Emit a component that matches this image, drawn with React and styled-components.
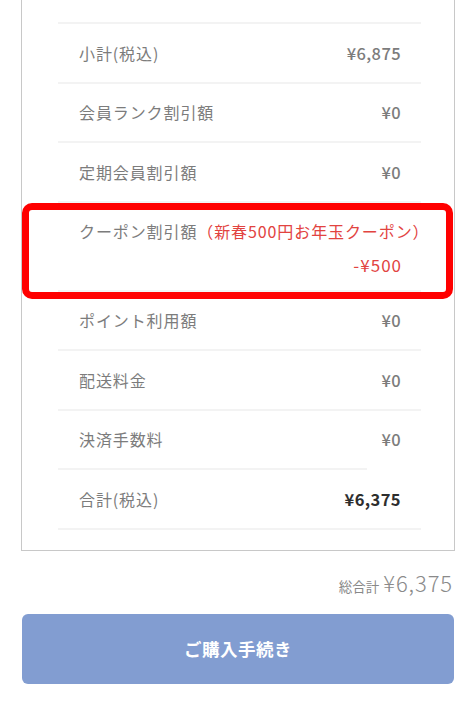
import React from "react";
import styled, { createGlobalStyle, css } from "styled-components";

const Global = createGlobalStyle`
  html, body { margin: 0; padding: 0; background: #fff; }
  body { font-family: "Noto Sans CJK JP", "Noto Sans", sans-serif; }
`;

const Page = styled.div`
  width: 474px;
  height: 704px;
  padding: 0 19px 0 21px;
  box-sizing: border-box;
  overflow: hidden;
`;

const Panel = styled.div`
  position: relative;
  border: 1px solid #c8c8c8;
  border-top: none;
  padding: 22px 33px 20px 36px;
  box-sizing: border-box;
`;

const List = styled.div`
  border-top: 2px solid #f3f3f3;
  display: flex;
  flex-direction: column;
`;

const Row = styled.div`
  position: relative;
  display: flex;
  align-items: center;
  justify-content: space-between;
  height: 57.5px;
  padding: 0 21px;
  border-bottom: 2px solid #f3f3f3;
  ${(p) =>
    p.$short &&
    css`
      border-bottom-color: transparent;
      &::after {
        content: "";
        position: absolute;
        left: 0;
        right: 54px;
        bottom: -2px;
        height: 2px;
        background: #f3f3f3;
      }
    `}
`;

const Label = styled.span`
  font-size: 16px;
  color: #7c7c7c;
  letter-spacing: 0.9px;
  white-space: nowrap;
`;

const Value = styled.span`
  font-size: 16.5px;
  font-weight: ${(p) => (p.$strong ? 700 : 500)};
  color: ${(p) => (p.$strong ? "#2e2e2e" : "#7c7c7c")};
  letter-spacing: 0.4px;
  margin-right: -1px;
  white-space: nowrap;
`;

const CouponRow = styled.div`
  display: flex;
  flex-direction: column;
  height: 89px;
  padding: 16px 21px 0;
  box-sizing: border-box;
  border-bottom: 2px solid #f3f3f3;
`;

const CouponName = styled.span`
  color: #e2433f;
`;

const CouponValue = styled.span`
  align-self: flex-end;
  margin-top: 9px;
  margin-right: -2px;
  font-size: 17px;
  font-weight: 400;
  color: #e2433f;
  letter-spacing: 1px;
  white-space: pre;
`;

const Highlight = styled.div`
  position: absolute;
  left: 0;
  right: 1px;
  top: 203px;
  height: 96px;
  border: 7px solid #ff0000;
  border-radius: 10px;
  box-sizing: border-box;
  pointer-events: none;
`;

const Total = styled.div`
  display: flex;
  justify-content: flex-end;
  align-items: baseline;
  gap: 4px;
  padding: 15px 2px 0 0;
  height: 63px;
  box-sizing: border-box;
`;

const TotalLabel = styled.span`
  font-size: 13.5px;
  color: #888;
`;

const TotalAmount = styled.span`
  font-size: 22px;
  font-weight: 300;
  color: #8a8a8a;
  letter-spacing: 0.9px;
`;

const Button = styled.button`
  display: flex;
  align-items: center;
  justify-content: center;
  width: 432px;
  height: 70px;
  margin-left: 1px;
  border: none;
  border-radius: 6px;
  background: #829dd1;
  color: #fff;
  font-family: inherit;
  font-size: 17.5px;
  font-weight: 700;
  letter-spacing: 0.5px;
`;

const rows = [
  ["小計(税込)", "¥6,875"],
  ["会員ランク割引額", "¥0"],
  ["定期会員割引額", "¥0"],
];

const rows2 = [
  ["ポイント利用額", "¥0"],
  ["配送料金", "¥0"],
  ["決済手数料", "¥0", true],
];

export default function App() {
  return (
    <>
      <Global />
      <Page>
        <Panel>
          <List>
            {rows.map(([l, v]) => (
              <Row key={l}>
                <Label>{l}</Label>
                <Value>{v}</Value>
              </Row>
            ))}
            <CouponRow>
              <Label>
                クーポン割引額<CouponName>（新春500円お年玉クーポン）</CouponName>
              </Label>
              <CouponValue>-¥500</CouponValue>
            </CouponRow>
            {rows2.map(([l, v, short]) => (
              <Row key={l} $short={short}>
                <Label>{l}</Label>
                <Value>{v}</Value>
              </Row>
            ))}
            <Row>
              <Label>合計(税込)</Label>
              <Value $strong>¥6,375</Value>
            </Row>
          </List>
          <Highlight />
        </Panel>
        <Total>
          <TotalLabel>総合計</TotalLabel>
          <TotalAmount>¥6,375</TotalAmount>
        </Total>
        <Button>ご購入手続き</Button>
      </Page>
    </>
  );
}
